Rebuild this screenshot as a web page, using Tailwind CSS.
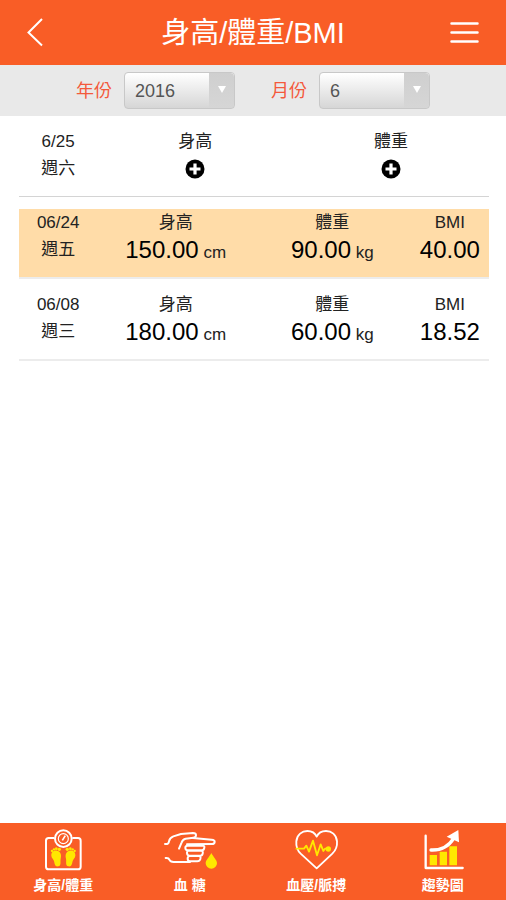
<!DOCTYPE html>
<html lang="zh-Hant">
<head>
<meta charset="utf-8">
<meta name="viewport" content="width=device-width, initial-scale=1">
<title>身高/體重/BMI</title>
<script src="https://cdn.jsdelivr.net/npm/@tailwindcss/browser@4"></script>
</head>
<body class="flex min-h-screen flex-col bg-white font-['Liberation_Sans','Noto_Sans_CJK_TC',sans-serif] text-[17px] leading-[27px] text-[#222]">
  <header class="flex h-[65px] items-center justify-between bg-[#f95d26] px-[26px] text-white">
    <button type="button" aria-label="返回" class="flex w-8 justify-start">
      <svg class="h-8 w-6" viewBox="2 0 24 32" fill="none" stroke="#fff" stroke-width="2"><path d="M18 2 4.500 15.500 18 28.500"/></svg>
    </button>
    <h1 class="text-[29px] leading-10">身高/體重/BMI</h1>
    <button type="button" aria-label="選單" class="flex w-8 justify-center">
      <svg class="h-6 w-8" viewBox="0 0 32 24" stroke="#fff" stroke-width="2.500" stroke-linecap="round"><path d="M3.500 2.500H29.500M3.500 11.500H29.500M3.500 20.500H29.500"/></svg>
    </button>
  </header>

  <form class="flex h-[51px] items-center justify-center gap-9 bg-[#e9e9e9] text-lg text-[#f4593c]">
    <div class="flex items-center gap-3">
      <label for="year">年份</label>
      <div class="relative">
        <select id="year" class="h-[37px] w-[111px] appearance-none rounded-sm border border-[#c8c8c8] bg-linear-to-b from-white to-[#d6d6d6] pl-[10px] text-lg text-[#555]"><option>2016</option></select>
        <span class="pointer-events-none absolute inset-y-px right-px flex w-[25px] justify-center rounded-r-sm bg-linear-to-b from-[#cfcfcf] to-[#d6d6d6] pt-3">
          <svg class="h-2 w-2" viewBox="0 0 8 8" fill="#fff"><path d="M0 1H8L4 8Z"/></svg>
        </span>
      </div>
    </div>
    <div class="flex items-center gap-3">
      <label for="month">月份</label>
      <div class="relative">
        <select id="month" class="h-[37px] w-[111px] appearance-none rounded-sm border border-[#c8c8c8] bg-linear-to-b from-white to-[#d6d6d6] pl-[10px] text-lg text-[#555]"><option>6</option></select>
        <span class="pointer-events-none absolute inset-y-px right-px flex w-[25px] justify-center rounded-r-sm bg-linear-to-b from-[#cfcfcf] to-[#d6d6d6] pt-3">
          <svg class="h-2 w-2" viewBox="0 0 8 8" fill="#fff"><path d="M0 1H8L4 8Z"/></svg>
        </span>
      </div>
    </div>
  </form>

  <main class="flex-1 pr-[17px] pl-[19px] text-center">
    <section class="mt-3 grid grid-cols-12 border-b border-[#d4d4d4] pb-[14px]">
      <div class="col-span-2"><p>6/25</p><p>週六</p></div>
      <div class="col-span-5">
        <p>身高</p>
        <button type="button" aria-label="新增身高" class="flex h-[27px] w-full items-center justify-center">
          <svg class="h-5 w-5" viewBox="0 0 20 20"><circle cx="10" cy="10" r="9.500" fill="#000"/><path d="M10 4.500V15.500M4.500 10H15.500" stroke="#fff" stroke-width="3.200"/></svg>
        </button>
      </div>
      <div class="col-span-5">
        <p>體重</p>
        <button type="button" aria-label="新增體重" class="flex h-[27px] w-full items-center justify-center">
          <svg class="h-5 w-5" viewBox="0 0 20 20"><circle cx="10" cy="10" r="9.500" fill="#000"/><path d="M10 4.500V15.500M4.500 10H15.500" stroke="#fff" stroke-width="3.200"/></svg>
        </button>
      </div>
    </section>
    <section class="mt-3 grid grid-cols-12 border-b-2 border-[#ececec] bg-[#ffdca8] bg-clip-padding pb-[14px]">
      <div class="col-span-2"><p>06/24</p><p>週五</p></div>
      <div class="col-span-4"><p>身高</p><p class="text-2xl leading-[27px] text-black">150.00<span class="text-[17px] leading-none text-[#222]"> cm</span></p></div>
      <div class="col-span-4"><p>體重</p><p class="text-2xl leading-[27px] text-black">90.00<span class="text-[17px] leading-none text-[#222]"> kg</span></p></div>
      <div class="col-span-2"><p>BMI</p><p class="text-2xl leading-[27px] text-black">40.00</p></div>
    </section>
    <section class="mt-3 grid grid-cols-12 border-b-2 border-[#ececec] pb-[14px]">
      <div class="col-span-2"><p>06/08</p><p>週三</p></div>
      <div class="col-span-4"><p>身高</p><p class="text-2xl leading-[27px] text-black">180.00<span class="text-[17px] leading-none text-[#222]"> cm</span></p></div>
      <div class="col-span-4"><p>體重</p><p class="text-2xl leading-[27px] text-black">60.00<span class="text-[17px] leading-none text-[#222]"> kg</span></p></div>
      <div class="col-span-2"><p>BMI</p><p class="text-2xl leading-[27px] text-black">18.52</p></div>
    </section>
  </main>

  <nav class="grid h-[77px] grid-cols-4 bg-[#f95d26] pt-1 text-center text-sm leading-5 font-bold text-white">
    <a href="#body" class="flex flex-col items-center gap-1">
      <svg class="h-11 w-[54px]" viewBox="49 36 162 132" fill="none" stroke="#fff" stroke-width="6">
        <path d="M104 69H87Q79 69 79 77V155Q79 163 87 163H175Q183 163 183 155V77Q183 69 175 69H158"/>
        <circle cx="131" cy="71" r="25"/><circle cx="131" cy="71" r="15" stroke-width="3.500"/><path d="M128 76 137 62" stroke-width="5"/>
        <g fill="#ffe800" stroke="none">
          <path d="M95 122C94 110 104 105 113 107C123 110 126 119 123 131C121 140 126 151 116 154C105 156 105 146 103 138C101 131 96 130 95 122Z"/>
          <path d="M167 122C168 110 158 105 149 107C139 110 136 119 139 131C141 140 136 151 146 154C157 156 157 146 159 138C161 131 166 130 167 122Z"/>
          <circle cx="97" cy="108" r="3.500"/><circle cx="103" cy="103" r="3.500"/><circle cx="110" cy="101" r="4"/><circle cx="119" cy="103" r="5"/>
          <circle cx="165" cy="108" r="3.500"/><circle cx="159" cy="103" r="3.500"/><circle cx="152" cy="101" r="4"/><circle cx="143" cy="103" r="5"/>
        </g>
      </svg>
      <span>身高/體重</span>
    </a>
    <a href="#sugar" class="flex flex-col items-center gap-1">
      <svg class="h-11 w-[54px]" viewBox="38 36 162 132" fill="none" stroke="#fff" stroke-width="6" stroke-linecap="round" stroke-linejoin="round">
        <path d="M44 87Q55 89 56 79Q58 68 69 64L92 57L128 54Q137 54 137 61Q137 67 129 68L106 71Q97 73 94 82L86 101"/>
        <path d="M128 69 184 74Q193 75 193 80Q193 87 184 87L110 88"/>
        <path d="M112 92H157Q163 92 162 98Q161 106 155 106H112Q105 105 105 98Q105 92 112 92ZM114 107H153Q159 108 157 116Q156 122 150 122H117Q110 121 110 113Q110 107 114 107ZM117 123H147Q152 124 150 132Q148 139 141 139H119Q112 138 112 131Q112 124 117 123Z"/>
        <path d="M46 129Q55 128 57 134Q60 141 70 141H119"/>
        <path d="M183 114C177 126 166 135 166 145A17 16 0 0 0 200 145C200 135 189 126 183 114Z" fill="#ffe800" stroke="none"/>
      </svg>
      <span>血 糖</span>
    </a>
    <a href="#pressure" class="flex flex-col items-center gap-1">
      <svg class="h-11 w-[54px]" viewBox="43 36 162 132" fill="none" stroke="#fff" stroke-width="5.500" stroke-linejoin="round">
        <path d="M126 160 78 116C67 105 64 91 65 79C67 59 82 48 98 48C112 48 122 56 126 65C130 56 140 48 154 48C171 48 185 59 187 79C188 91 184 105 173 116Z"/>
        <path d="M63 101H88L95 92 103 110 115 77 127 121 138 88 146 108 151 101H160" stroke="#ffe800"/><circle cx="161" cy="102" r="8" fill="#ffe800" stroke="none"/>
      </svg>
      <span>血壓/脈搏</span>
    </a>
    <a href="#trend" class="flex flex-col items-center gap-1">
      <svg class="h-11 w-[54px]" viewBox="47 36 162 132" fill="none" stroke="#fff" stroke-width="7" stroke-linecap="round">
        <path d="M88 120H110V151H88ZM118 110H140V151H118ZM147 94H170V151H147Z" fill="#ffe800" stroke="none"/>
        <path d="M76 62V159H187" stroke-linejoin="round"/>
        <path d="M92 105Q137 107 160 70" stroke-width="10"/><path d="M174 45 139 65 176 82Z" fill="#fff" stroke="none"/>
      </svg>
      <span>趨勢圖</span>
    </a>
  </nav>
</body>
</html>
